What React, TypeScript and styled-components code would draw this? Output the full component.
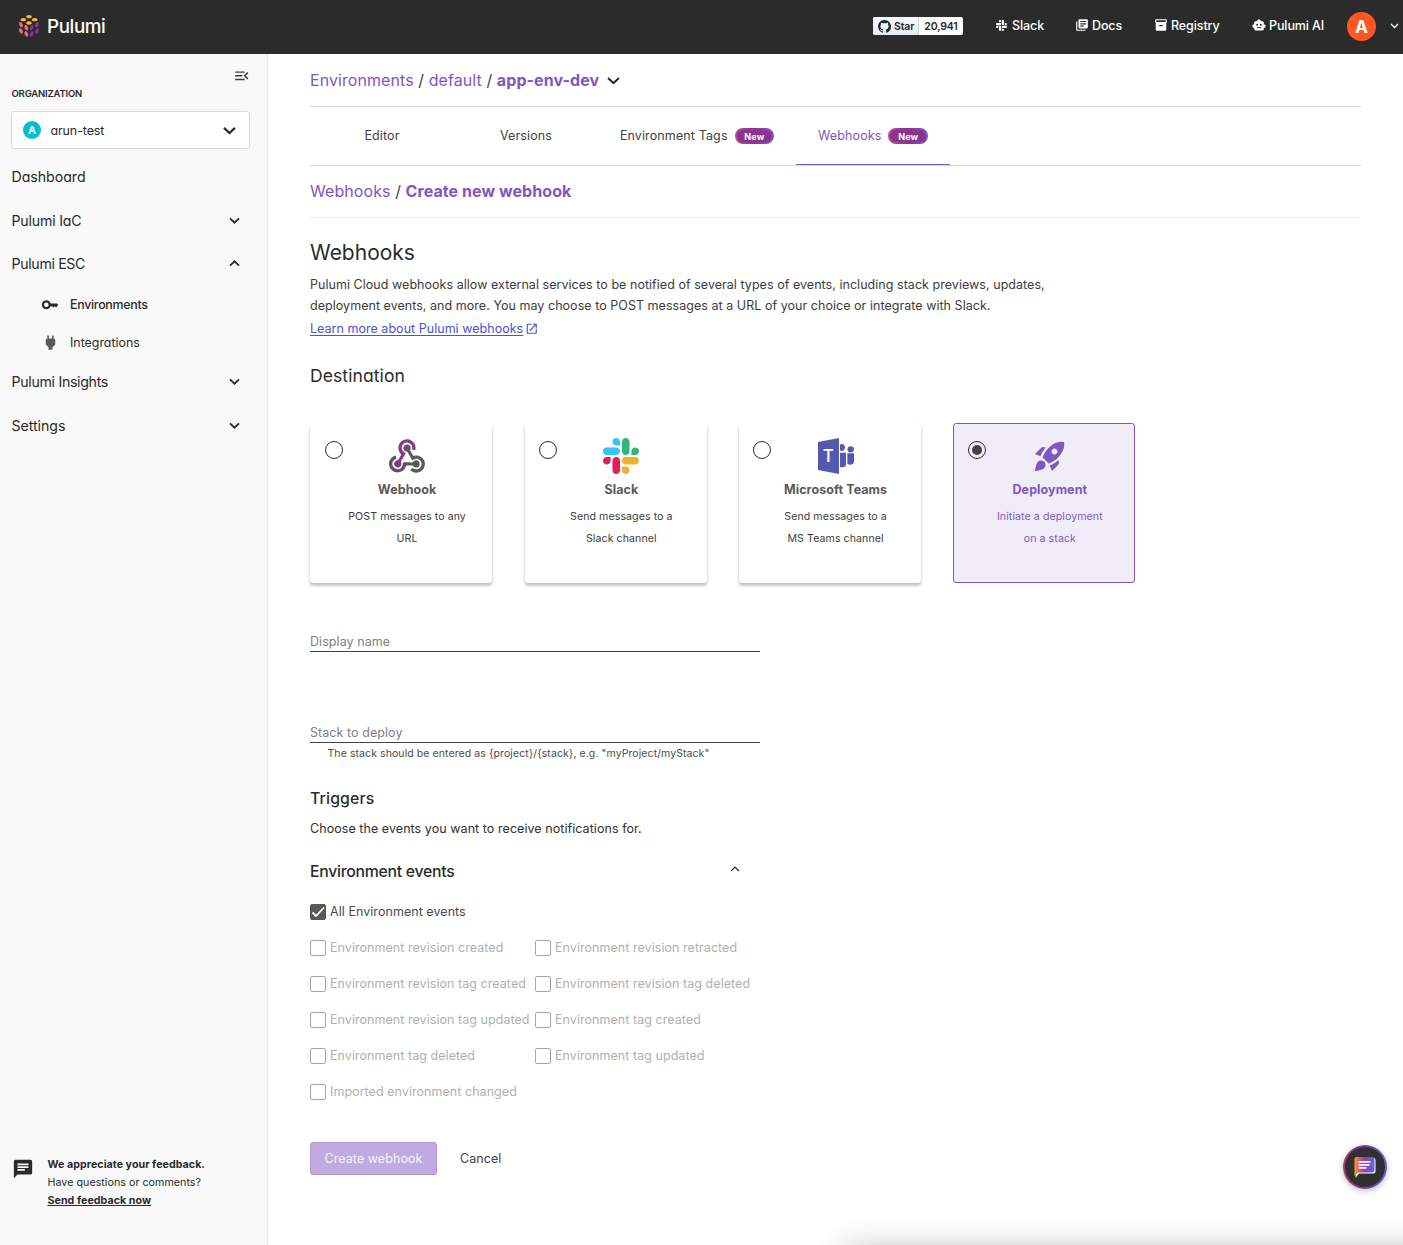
import React from "react";
import styled, { createGlobalStyle, css } from "styled-components";
import {
  MdMenuOpen, MdLibraryBooks, MdInventory2, MdChat, MdOpenInNew, MdRocketLaunch, MdPower,
} from "react-icons/md";

const purple = "#7f57c2";

const Global = createGlobalStyle`
  * { box-sizing: border-box; }
  body { margin: 0; background: #fff; color: #424242; font-family: Inter, "Noto Sans", sans-serif; font-size: 12.5px; overflow: hidden; }
  h2, h3, h4, p { margin: 0; }
  svg { display: block; flex: none; }
`;

const rounded = css`
  font-feature-settings: "cv11";
  color: #2b2b2b;
`;

const Page = styled.div`
  height: 1245px;
  display: flex;
  flex-direction: column;
  position: relative;
  overflow: hidden;
`;
const Header = styled.header`
  height: 54px;
  flex: none;
  background: #2b2b2b;
  color: #fff;
  display: flex;
  align-items: center;
  justify-content: space-between;
  padding: 0 3px 2px 18px;
`;
const Brand = styled.div`
  display: flex;
  align-items: center;
  gap: 7px;
  font-size: 18.8px;
  font-weight: 500;
  letter-spacing: -0.4px;
  font-feature-settings: "cv11";
`;
const HeaderNav = styled.nav`
  display: flex;
  align-items: center;
`;
const HeaderLink = styled.a<{ $width: number }>`
  width: ${p => p.$width}px;
  display: flex;
  align-items: center;
  padding-bottom: 1.5px;
  font-weight: 500;
  font-size: 12.5px;
  letter-spacing: -0.1px;
  white-space: nowrap;
`;
const LinkIcon = styled.span<{ $inset?: boolean }>`
  width: 16px;
  margin-left: -1px;
  margin-right: 1px;
  padding-left: ${p => (p.$inset ? "1px" : "0")};
`;
const StarBadge = styled.div`
  display: flex;
  width: 90px;
  height: 18px;
  margin-right: 33px;
  color: #24292f;
  font-size: 10.5px;
  font-weight: 600;
  letter-spacing: -0.15px;
  border-radius: 2px;
  overflow: hidden;
  background: #fff;
`;
const StarLabel = styled.span`
  width: 46px;
  display: flex;
  align-items: center;
  gap: 3px;
  padding-left: 5px;
  background: linear-gradient(#f6f8fa, #e6ebf1);
  border-right: 1px solid #d0d5da;
`;
const StarCount = styled.span`
  flex: 1;
  display: flex;
  align-items: center;
  justify-content: center;
`;
const Avatar = styled.span<{ $size: number; $color: string }>`
  width: ${p => p.$size}px;
  height: ${p => p.$size}px;
  border-radius: 50%;
  background: ${p => p.$color};
  color: #fff;
  display: flex;
  align-items: center;
  justify-content: center;
  flex: none;
  font-weight: 700;
  font-size: ${p => p.$size * 0.6}px;
`;
const Body = styled.div`
  flex: 1;
  display: flex;
`;
const Sidebar = styled.aside`
  width: 268px;
  flex: none;
  background: #f9f9f9;
  border-right: 1px solid #e8e8e8;
  display: flex;
  flex-direction: column;
  padding: 13px 17px 35px 11px;
`;
const Collapse = styled.div`
  display: flex;
  justify-content: flex-end;
  height: 18px;
  margin-right: -0.5px;
  color: #3c3c3c;
`;
const OrgLabel = styled.div`
  ${rounded}
  padding-left: 0.5px;
  font-size: 9.5px;
  font-weight: 600;
  letter-spacing: -0.18px;
  line-height: 17px;
  height: 26px;
`;
const OrgSelect = styled.div`
  ${rounded}
  width: 239px;
  height: 38px;
  margin-bottom: 6px;
  border: 1px solid #d9d9d9;
  border-radius: 3px;
  background: #fff;
  display: flex;
  align-items: center;
  padding: 0 13px 0 11px;
  font-size: 12.5px;
  letter-spacing: -0.1px;
`;
const OrgName = styled.span`
  flex: 1;
  margin-left: 9.4px;
`;
const NavItem = styled.div<{ $spacing?: number }>`
  ${rounded}
  height: 43.5px;
  width: 229px;
  display: flex;
  align-items: center;
  justify-content: space-between;
  font-size: 14.2px;
  letter-spacing: ${p => p.$spacing ?? -0.2}px;
  padding-left: 0.5px;
`;
const SubItem = styled.div<{ $active?: boolean }>`
  ${rounded}
  height: 37.3px;
  display: flex;
  align-items: center;
  padding: ${p => (p.$active ? "1px" : "2px")} 0 0 30px;
  font-size: 12.4px;
  font-weight: ${p => (p.$active ? 500 : 400)};
  letter-spacing: ${p => (p.$active ? "-0.28px" : "0")};
`;
const SubIcon = styled.span<{ $active?: boolean }>`
  width: 18px;
  margin-right: 11px;
  display: flex;
  justify-content: center;
  color: ${p => (p.$active ? "#2b2b2b" : "#5a5a5a")};
`;
const Feedback = styled.div`
  margin-top: auto;
  display: flex;
  gap: 14px;
  color: #2b2b2b;
  font-size: 10.7px;
  letter-spacing: 0.03px;
  line-height: 18px;
  padding-left: 0.5px;
  svg { margin-top: 2px; }
  a { font-weight: 700; text-decoration: underline; }
`;
const Main = styled.main`
  flex: 1;
  display: flex;
  flex-direction: column;
  padding: 0 42px;
`;
const Crumbs = styled.div<{ $height: number; $line: string; $lift?: number }>`
  height: ${p => p.$height}px;
  padding-bottom: ${p => p.$lift ?? 0}px;
  border-bottom: 1px solid ${p => p.$line};
  display: flex;
  align-items: center;
  font-size: 16px;
  letter-spacing: 0.075px;
  white-space: pre;
  a, b { color: ${purple}; }
  svg { margin-left: 8px; }
`;
const Tabs = styled.div`
  height: 59px;
  border-bottom: 1px solid #d9d9d9;
  display: flex;
`;
const Tab = styled.div<{ $width: number; $active?: boolean }>`
  width: ${p => p.$width}px;
  display: flex;
  align-items: center;
  justify-content: center;
  gap: 7px;
  font-weight: 420;
  letter-spacing: 0.12px;
  border-bottom: 1px solid ${p => (p.$active ? purple : "transparent")};
  color: ${p => (p.$active ? purple : "#424242")};
`;
const NewBadge = styled.span`
  width: 39.5px;
  height: 16px;
  margin-top: 1px;
  border: 2px solid transparent;
  border-radius: 8px;
  background: linear-gradient(#8a3391, #8a3391) padding-box, linear-gradient(90deg, #bd4c85, #8a3391 50%, #805ac3) border-box;
  color: #fff;
  display: flex;
  align-items: center;
  justify-content: center;
  font-size: 9px;
  font-weight: 700;
`;
const Title = styled.h2`
  ${rounded}
  margin-top: 20px;
  font-size: 21px;
  font-weight: 440;
  line-height: 30px;
`;
const Paragraph = styled.p`
  margin-top: 6px;
  line-height: 21px;
  letter-spacing: 0.04px;
  white-space: nowrap;
  color: #3c3c3c;
`;
const LearnMore = styled.a`
  display: flex;
  align-items: center;
  gap: 2px;
  height: 25px;
  color: #4752d6;
  letter-spacing: 0.03px;
  span { text-decoration: underline; text-underline-offset: 2px; }
`;
const SectionTitle = styled.h3`
  ${rounded}
  margin-top: 22px;
  font-size: 17.5px;
  font-weight: 440;
  line-height: 26px;
  letter-spacing: 0.1px;
`;
const Cards = styled.div`
  display: flex;
  gap: 32.25px;
  margin-top: 34px;
  padding-left: 0.3px;
`;
const Card = styled.div<{ $selected?: boolean }>`
  width: 182px;
  height: 160px;
  display: flex;
  border-radius: 3px;
  border: 1px solid ${p => (p.$selected ? purple : "#fff")};
  background: ${p => (p.$selected ? "#f1edf8" : "#fff")};
  box-shadow: ${p => (p.$selected ? "none" : "0 3px 3px rgba(0,0,0,.2), 0 1px 3px rgba(0,0,0,.09)")};
  color: ${p => (p.$selected ? purple : "#3c3c3c")};
  padding: 14px 14px 14px 13.6px;
`;
const Radio = styled.span`
  width: 18px;
  height: 18px;
  margin-top: 3px;
  border: 1px solid #2b2b2b;
  border-radius: 50%;
  display: flex;
  align-items: center;
  justify-content: center;
`;
const Dot = styled.span`
  width: 10px;
  height: 10px;
  border-radius: 50%;
  background: #424242;
`;
const CardContent = styled.div`
  width: 120px;
  margin-left: 4.2px;
  display: flex;
  flex-direction: column;
  align-items: center;
  text-align: center;
`;
const CardTitle = styled.div<{ $selected?: boolean }>`
  margin-top: 5px;
  line-height: 21px;
  font-weight: 700;
  letter-spacing: 0.07px;
  color: ${p => (p.$selected ? purple : "#595959")};
`;
const CardText = styled.div`
  margin-top: 6px;
  font-size: 10.6px;
  line-height: 22px;
  letter-spacing: 0.08px;
`;
const Field = styled.input`
  display: block;
  width: 450px;
  height: 20px;
  padding: 0;
  border: 0;
  border-bottom: 1px solid #424242;
  font: inherit;
  letter-spacing: 0.06px;
  background: none;
  border-radius: 0;
  outline: none;
  &::placeholder { color: #808080; opacity: 1; }
`;
const FieldGroup = styled.div<{ $top: number }>`
  margin-top: ${p => p.$top}px;
`;
const Hint = styled.div`
  padding-left: 17.5px;
  line-height: 21px;
  font-size: 10.5px;
  letter-spacing: 0.085px;
  color: #4a4a4a;
`;
const SmallTitle = styled.h4<{ $spacing: number }>`
  ${rounded}
  font-size: 15.8px;
  font-weight: 500;
  line-height: 20px;
  letter-spacing: ${p => p.$spacing}px;
`;
const Triggers = styled.section`
  margin-top: 25px;
`;
const TriggerText = styled.p`
  margin-top: 9px;
  line-height: 21px;
  color: #2f2f2f;
  letter-spacing: 0.06px;
`;
const GroupHead = styled.div`
  width: 430px;
  margin-top: 23px;
  height: 31px;
  display: flex;
  justify-content: space-between;
  svg { margin-top: 2px; }
`;
const EventGrid = styled.div`
  display: grid;
  grid-template-columns: 225px 225px;
  grid-auto-rows: 36px;
`;
const EventItem = styled.label<{ $checked?: boolean }>`
  grid-column: ${p => (p.$checked ? "1 / -1" : "auto")};
  display: flex;
  align-items: center;
  gap: 4px;
  letter-spacing: 0.05px;
  white-space: nowrap;
  color: ${p => (p.$checked ? "#4a4a4a" : "#b0b0b0")};
`;
const Box = styled.span<{ $checked?: boolean }>`
  width: 16px;
  height: 16px;
  margin-top: 2px;
  flex: none;
  border-radius: 2px;
  border: 1px solid ${p => (p.$checked ? "#595959" : "#a6a6a6")};
  background: ${p => (p.$checked ? "#595959" : "#fff")};
`;
const Actions = styled.div`
  display: flex;
  margin-top: 33px;
  gap: 23px;
`;
const Button = styled.button<{ $primary?: boolean }>`
  height: 33px;
  width: ${p => (p.$primary ? "127px" : "auto")};
  padding: 0;
  font: inherit;
  letter-spacing: 0.06px;
  border-radius: 3px;
  border: ${p => (p.$primary ? "1px solid #b096d8" : "0")};
  background: ${p => (p.$primary ? "#bfabe1" : "none")};
  color: ${p => (p.$primary ? "#f7f3fc" : "#424242")};
`;
const ChatButton = styled.div`
  position: absolute;
  left: 1343px;
  top: 1145px;
  width: 44px;
  height: 44px;
  border-radius: 50%;
  border: 2px solid transparent;
  background: linear-gradient(#303030, #303030) padding-box, linear-gradient(90deg, #b13a72, #8a3391 45%, #5f62d6) border-box;
  box-shadow: 0 2px 6px rgba(0,0,0,.25);
  display: flex;
  align-items: center;
  justify-content: center;
  padding-right: 1px;
`;
const BottomShade = styled.div`
  position: absolute;
  left: 845px;
  top: 1252px;
  width: 700px;
  height: 60px;
  box-shadow: 0 0 36px rgba(0,0,0,.3);
`;

function Chevron({ size = 10, up, width = 1.8, color = "#2b2b2b" }: { size?: number; up?: boolean; width?: number; color?: string }) {
  return (
    <svg width={size} height={size} viewBox={`0 0 ${size} ${size}`} fill="none" stroke={color} strokeWidth={width}>
      <path d={up ? `M1 ${size * 0.7}L${size / 2} ${size * 0.3}L${size - 1} ${size * 0.7}` : `M1 ${size * 0.3}L${size / 2} ${size * 0.7}L${size - 1} ${size * 0.3}`} />
    </svg>
  );
}

function PulumiLogo() {
  const top = [[87, 50], [70, 59], [104, 59], [87, 69]];
  const left = [[63, 74], [79, 83], [63, 93], [79, 102]];
  return (
    <svg width="22" height="24" viewBox="54 42 66 72">
      {top.map(([x, y]) => <ellipse key={`${x}${y}`} cx={x} cy={y} rx="8.5" ry="5" fill="#f7bf2a" />)}
      {left.map(([x, y]) => <ellipse key={`${x}${y}`} cx={x} cy={y} rx="5" ry="8.5" fill="#f26e7e" transform={`rotate(-28 ${x} ${y})`} />)}
      {left.map(([x, y]) => <ellipse key={`${x}${y}`} cx={174 - x} cy={y} rx="5" ry="8.5" fill="#8a3391" transform={`rotate(28 ${174 - x} ${y})`} />)}
    </svg>
  );
}

function KeyIcon() {
  return (
    <svg width="18" height="12" viewBox="0 0 18 12">
      <circle cx="5.3" cy="5.8" r="3.4" fill="none" stroke="#2b2b2b" strokeWidth="2.2" />
      <path fill="#2b2b2b" d="M8.5 4.4H16l1.3 1.4-2.2 2.6-1.3-1.1-1.3 1.2-1.3-1.2H8.5z" />
    </svg>
  );
}

function GithubMark() {
  return (
    <svg width="13" height="13" viewBox="0 0 16 16" fill="#24292f">
      <path d="M8 0C3.58 0 0 3.58 0 8c0 3.54 2.29 6.53 5.47 7.59.4.07.55-.17.55-.38 0-.19-.01-.82-.01-1.49-2.01.37-2.53-.49-2.69-.94-.09-.23-.48-.94-.82-1.13-.28-.15-.68-.52-.01-.53.63-.01 1.08.58 1.23.82.72 1.21 1.87.87 2.33.66.07-.52.28-.87.51-1.07-1.78-.2-3.64-.89-3.64-3.95 0-.87.31-1.59.82-2.15-.08-.2-.36-1.02.08-2.12 0 0 .67-.21 2.2.82.64-.18 1.32-.27 2-.27.68 0 1.36.09 2 .27 1.53-1.04 2.2-.82 2.2-.82.44 1.1.16 1.92.08 2.12.51.56.82 1.27.82 2.15 0 3.07-1.87 3.75-3.65 3.95.29.25.54.73.54 1.48 0 1.07-.01 1.93-.01 2.2 0 .21.15.46.55.38A8.013 8.013 0 0 0 16 8c0-4.42-3.58-8-8-8z" />
    </svg>
  );
}

function SlackMark({ size, mono }: { size: number; mono?: boolean }) {
  const c = mono ? ["#fff", "#fff", "#fff", "#fff"] : ["#e01e5a", "#36c5f0", "#2eb67d", "#ecb22e"];
  return (
    <svg width={size} height={size} viewBox="0 0 122.8 122.8">
      <path fill={c[0]} d="M25.8 77.6c0 7.1-5.8 12.9-12.9 12.9S0 84.7 0 77.6s5.8-12.9 12.9-12.9h12.9v12.9zm6.5 0c0-7.1 5.8-12.9 12.9-12.9s12.9 5.8 12.9 12.9v32.3c0 7.1-5.8 12.9-12.9 12.9s-12.9-5.8-12.9-12.9V77.6z" />
      <path fill={c[1]} d="M45.2 25.8c-7.1 0-12.9-5.8-12.9-12.9S38.1 0 45.2 0s12.9 5.8 12.9 12.9v12.9H45.2zm0 6.5c7.1 0 12.9 5.8 12.9 12.9s-5.8 12.9-12.9 12.9H12.9C5.8 58.1 0 52.3 0 45.2s5.8-12.9 12.9-12.9h32.3z" />
      <path fill={c[2]} d="M97 45.2c0-7.1 5.8-12.9 12.9-12.9s12.9 5.8 12.9 12.9-5.8 12.9-12.9 12.9H97V45.2zm-6.5 0c0 7.1-5.8 12.9-12.9 12.9s-12.9-5.8-12.9-12.9V12.9C64.7 5.8 70.5 0 77.6 0s12.9 5.8 12.9 12.9v32.3z" />
      <path fill={c[3]} d="M77.6 97c7.1 0 12.9 5.8 12.9 12.9s-5.8 12.9-12.9 12.9-12.9-5.8-12.9-12.9V97h12.9zm0-6.5c-7.1 0-12.9-5.8-12.9-12.9s5.8-12.9 12.9-12.9h32.3c7.1 0 12.9 5.8 12.9 12.9s-5.8 12.9-12.9 12.9H77.6z" />
    </svg>
  );
}

function BotIcon() {
  return (
    <svg width="14" height="14" viewBox="-1 -1 26 26">
      <path fill="#fff" d="M12 1l4.5 4H18a3 3 0 0 1 3 3v2.5a3.2 3.2 0 0 1 0 7V19a3 3 0 0 1-3 3H6a3 3 0 0 1-3-3v-1.5a3.2 3.2 0 0 1 0-7V8a3 3 0 0 1 3-3h1.5z" />
      <circle cx="8.5" cy="11.5" r="1.7" fill="#2b2b2b" />
      <circle cx="15.5" cy="11.5" r="1.7" fill="#2b2b2b" />
      <path d="M8 17h8" stroke="#2b2b2b" strokeWidth="1.8" />
    </svg>
  );
}

function WebhookIcon() {
  return (
    <svg width="36" height="36" viewBox="0 -8 256 256">
      <path fill="#8a3391" d="M119.54 100.503c-10.61 17.836-20.775 35.108-31.152 52.25c-2.665 4.401-3.984 7.986-1.855 13.58c5.878 15.454-2.414 30.493-17.998 34.575c-14.697 3.851-29.016-5.808-31.932-21.543c-2.584-13.927 8.224-27.58 23.58-29.757c1.286-.184 2.6-.205 4.762-.367l23.358-39.168C73.612 95.465 64.868 78.39 66.803 57.23c1.368-14.957 7.25-27.883 18-38.477c20.59-20.288 52.002-23.573 76.246-8.001c23.284 14.958 33.948 44.094 24.858 69.031c-6.854-1.858-13.756-3.732-21.343-5.79c2.854-13.865.743-26.315-8.608-36.981c-6.178-7.042-14.106-10.733-23.12-12.093c-18.072-2.73-35.815 8.88-41.08 26.618c-5.976 20.13 3.069 36.575 27.784 48.967z" />
      <path fill="#595959" d="M149.841 79.41c7.475 13.187 15.065 26.573 22.587 39.836c38.02-11.763 66.686 9.284 76.97 31.817c12.422 27.219 3.93 59.457-20.465 76.25c-25.04 17.238-56.707 14.293-78.892-7.851c5.654-4.733 11.336-9.487 17.407-14.566c21.912 14.192 41.077 13.524 55.305-3.282c12.133-14.337 11.87-35.714-.615-49.75c-14.408-16.197-33.707-16.691-57.035-1.143c-9.677-17.168-19.522-34.199-28.893-51.491c-3.16-5.828-6.648-9.21-13.77-10.443c-11.893-2.062-19.571-12.275-20.032-23.717c-.453-11.316 6.214-21.545 16.634-25.53c10.322-3.949 22.435-.762 29.378 8.014c5.674 7.17 7.477 15.24 4.491 24.083c-.83 2.466-1.905 4.852-3.07 7.774z" />
      <path fill="#595959" d="M167.707 187.21h-45.77c-4.387 18.044-13.863 32.612-30.19 41.876c-12.693 7.2-26.373 9.641-40.933 7.29c-26.808-4.323-48.728-28.456-50.658-55.63c-2.184-30.784 18.975-58.147 47.178-64.293c1.947 7.071 3.915 14.21 5.862 21.264c-25.876 13.202-34.832 29.836-27.59 50.636c6.375 18.304 24.484 28.337 44.147 24.457c20.08-3.962 30.204-20.65 28.968-47.432c19.036 0 38.088-.197 57.126.097c7.434.117 13.173-.654 18.773-7.208c9.22-10.784 26.191-9.811 36.121.374c10.148 10.409 9.662 27.157-1.077 37.127c-10.361 9.62-26.73 9.106-36.424-1.26c-1.992-2.136-3.562-4.673-5.533-7.298z" />
    </svg>
  );
}

const TeamsLetter = styled.text`
  font: 600 54px "Open Sans", sans-serif;
  fill: #fff;
  text-anchor: middle;
`;
function TeamsIcon() {
  return (
    <svg width="36" height="36" viewBox="0 0 108 108" fill="#5558af">
      <path d="M0 12L63 0v108L0 96z" />
      <TeamsLetter x="31" y="73">T</TeamsLetter>
      <path d="M66 20a10 10 0 1 1 0 17z" />
      <circle cx="98" cy="34" r="9.5" />
      <path d="M66 44h18v34q0 10-10 10h-8z" />
      <path d="M88 46h20v24q0 10-10 10q-6 0-10-3z" />
    </svg>
  );
}

function ChatIcon() {
  return (
    <svg width="23" height="23" viewBox="0 0 23 23">
      <defs>
        <linearGradient id="chat" x1="0" x2="1">
          <stop offset="0" stopColor="#f7a12a" />
          <stop offset=".28" stopColor="#d9517a" />
          <stop offset=".55" stopColor="#8a3fb0" />
          <stop offset="1" stopColor="#5b6be8" />
        </linearGradient>
      </defs>
      <path fill="#fff" d="M4 2h16.5a2 2 0 0 1 2 2v11.5a2 2 0 0 1-2 2H6l-3.5 4.5z" />
      <path fill="url(#chat)" d="M1.5 3a2 2 0 0 1 2-2h16a2 2 0 0 1 2 2v11.5a2 2 0 0 1-2 2H5.5L1.5 20z" />
      <path d="M5.5 5.8h12M5.5 8.8h11M5.5 11.8h8" stroke="#fff" strokeWidth="1.8" />
    </svg>
  );
}

const destinations = [
  { title: "Webhook", text: "POST messages to any URL", icon: <WebhookIcon /> },
  { title: "Slack", text: "Send messages to a Slack channel", icon: <SlackMark size={36} /> },
  { title: "Microsoft Teams", text: "Send messages to a MS Teams channel", icon: <TeamsIcon /> },
  { title: "Deployment", text: "Initiate a deployment on a stack", icon: <MdRocketLaunch size={36} />, selected: true },
];
const events = [
  "Environment revision created", "Environment revision retracted",
  "Environment revision tag created", "Environment revision tag deleted",
  "Environment revision tag updated", "Environment tag created",
  "Environment tag deleted", "Environment tag updated",
  "Imported environment changed",
];

export default function App() {
  return (
    <Page>
      <Global />
      <Header>
        <Brand><PulumiLogo />Pulumi</Brand>
        <HeaderNav>
          <StarBadge>
            <StarLabel><GithubMark />Star</StarLabel>
            <StarCount>20,941</StarCount>
          </StarBadge>
          <HeaderLink $width={80}><LinkIcon $inset><SlackMark size={11} mono /></LinkIcon>Slack</HeaderLink>
          <HeaderLink $width={79}><LinkIcon><MdLibraryBooks size={14} /></LinkIcon>Docs</HeaderLink>
          <HeaderLink $width={98}><LinkIcon><MdInventory2 size={14} /></LinkIcon>Registry</HeaderLink>
          <HeaderLink $width={94}><LinkIcon><BotIcon /></LinkIcon>Pulumi AI</HeaderLink>
          <Avatar $size={29} $color="#ff5722">A</Avatar>
          <svg width="24" height="10" viewBox="0 0 24 10" fill="none" stroke="#fff" strokeWidth="1.3"><path d="M15 3l3.5 3.5L22 3" /></svg>
        </HeaderNav>
      </Header>
      <Body>
        <Sidebar>
          <Collapse><MdMenuOpen size={17.5} /></Collapse>
          <OrgLabel>ORGANIZATION</OrgLabel>
          <OrgSelect>
            <Avatar $size={18} $color="#00bcd4">A</Avatar>
            <OrgName>arun-test</OrgName>
            <Chevron size={13} width={2.2} />
          </OrgSelect>
          <NavItem $spacing={-0.05}>Dashboard</NavItem>
          <NavItem>Pulumi IaC<Chevron size={11} /></NavItem>
          <NavItem $spacing={-0.35}>Pulumi ESC<Chevron size={11} up /></NavItem>
          <SubItem $active><SubIcon $active><KeyIcon /></SubIcon>Environments</SubItem>
          <SubItem><SubIcon><MdPower size={19} /></SubIcon>Integrations</SubItem>
          <NavItem $spacing={-0.32}>Pulumi Insights<Chevron size={11} /></NavItem>
          <NavItem $spacing={-0.05}>Settings<Chevron size={11} /></NavItem>
          <Feedback>
            <MdChat size={22} />
            <div>
              <b>We appreciate your feedback.</b>
              <div>Have questions or comments?</div>
              <a>Send feedback now</a>
            </div>
          </Feedback>
        </Sidebar>
        <Main>
          <Crumbs $height={53} $line="#d9d9d9">
            <a>Environments</a> / <a>default</a> / <b>app-env-dev</b><Chevron size={13} width={2} />
          </Crumbs>
          <Tabs>
            <Tab $width={144}>Editor</Tab>
            <Tab $width={144}>Versions</Tab>
            <Tab $width={198}>Environment Tags<NewBadge>New</NewBadge></Tab>
            <Tab $width={154} $active>Webhooks<NewBadge>New</NewBadge></Tab>
          </Tabs>
          <Crumbs $height={52} $line="#eee" $lift={1.5}><a>Webhooks</a> / <b>Create new webhook</b></Crumbs>
          <Title>Webhooks</Title>
          <Paragraph>
            Pulumi Cloud webhooks allow external services to be notified of several types of events, including stack previews, updates,
            <br />
            deployment events, and more. You may choose to POST messages at a URL of your choice or integrate with Slack.
          </Paragraph>
          <LearnMore><span>Learn more about Pulumi webhooks</span><MdOpenInNew size={13.5} /></LearnMore>
          <SectionTitle>Destination</SectionTitle>
          <Cards>
            {destinations.map(d => (
              <Card key={d.title} $selected={d.selected}>
                <Radio>{d.selected && <Dot />}</Radio>
                <CardContent>
                  {d.icon}
                  <CardTitle $selected={d.selected}>{d.title}</CardTitle>
                  <CardText>{d.text}</CardText>
                </CardContent>
              </Card>
            ))}
          </Cards>
          <FieldGroup $top={49}><Field placeholder="Display name" /></FieldGroup>
          <FieldGroup $top={71}>
            <Field placeholder="Stack to deploy" />
            <Hint>The stack should be entered as {"{project}/{stack}"}, e.g. "myProject/myStack"</Hint>
          </FieldGroup>
          <Triggers>
            <SmallTitle $spacing={0.15}>Triggers</SmallTitle>
            <TriggerText>Choose the events you want to receive notifications for.</TriggerText>
            <GroupHead>
              <SmallTitle $spacing={-0.27}>Environment events</SmallTitle>
              <Chevron size={10} up width={1.2} />
            </GroupHead>
            <EventGrid>
              <EventItem $checked>
                <Box $checked>
                  <svg width="14" height="14" viewBox="0 0 14 14" fill="none" stroke="#fff" strokeWidth="1.8"><path d="M1.5 7.5l3.5 3.5 8-8.5" /></svg>
                </Box>
                All Environment events
              </EventItem>
              {events.map(e => <EventItem key={e}><Box />{e}</EventItem>)}
            </EventGrid>
          </Triggers>
          <Actions>
            <Button $primary>Create webhook</Button>
            <Button>Cancel</Button>
          </Actions>
        </Main>
      </Body>
      <BottomShade />
      <ChatButton><ChatIcon /></ChatButton>
    </Page>
  );
}
